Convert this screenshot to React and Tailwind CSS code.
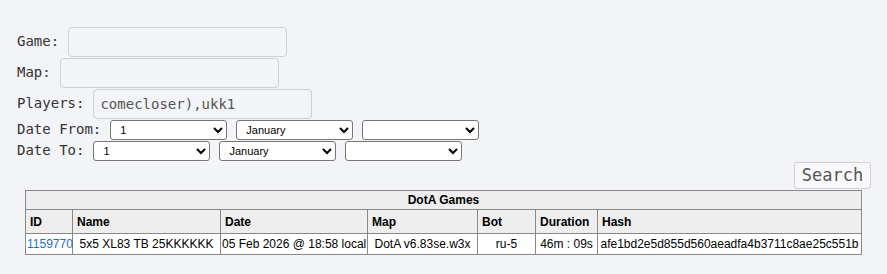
import { useState } from 'react'

const days = Array.from({ length: 31 }, (_, i) => String(i + 1))
const months = ['January', 'February', 'March', 'April', 'May', 'June', 'July', 'August', 'September', 'October', 'November', 'December']

const games = [
  {
    id: '1159770',
    name: '5x5 XL83 TB 25KKKKKK',
    date: '05 Feb 2026 @ 18:58 local',
    map: 'DotA v6.83se.w3x',
    bot: 'ru-5',
    duration: '46m : 09s',
    hash: 'afe1bd2e5d855d560aeadfa4b3711c8ae25c551b'
  }
]

function DateRow({ label }) {
  return (
    <div className="flex items-center h-[21px]">
      <span className="mr-[9px]">{label}</span>
      <div className="flex gap-[9px]">
        <select className="w-[117px] h-[20px] bg-white border border-[#767676] rounded-[3px] text-[11px] pl-[5px] text-black" style={{ fontFamily: '"Liberation Sans", Arial, sans-serif' }} defaultValue="1">
          {days.map((d) => <option key={d}>{d}</option>)}
        </select>
        <select className="w-[117px] h-[20px] bg-white border border-[#767676] rounded-[3px] text-[11px] pl-[5px] text-black" style={{ fontFamily: '"Liberation Sans", Arial, sans-serif' }} defaultValue="January">
          {months.map((m) => <option key={m}>{m}</option>)}
        </select>
        <select className="w-[117px] h-[20px] bg-white border border-[#767676] rounded-[3px] text-[11px] pl-[5px] text-black" style={{ fontFamily: '"Liberation Sans", Arial, sans-serif' }} defaultValue="">
          <option value=""></option>
        </select>
      </div>
    </div>
  )
}

function App() {
  const [game, setGame] = useState('')
  const [map, setMap] = useState('')
  const [players, setPlayers] = useState('comecloser),ukk1')

  const input = 'w-[219px] h-[30px] bg-[#f3f4f8] border border-[#cfd0d4] rounded-[4px] px-[6px] text-[14px] text-[#555] focus:outline-none'

  return (
    <div className="min-h-screen w-[887px] h-[274px] bg-[#f3f4f8] text-[#333]">
      <div className="pt-[26px] pl-[17px] text-[14px] font-['DejaVu_Sans_Mono',monospace]">
        <div className="flex items-center h-[31px]">
          <span className="mr-[9px]">Game:</span>
          <input className={input} value={game} onChange={(e) => setGame(e.target.value)} />
        </div>
        <div className="flex items-center h-[31px]">
          <span className="mr-[9px]">Map:</span>
          <input className={input} value={map} onChange={(e) => setMap(e.target.value)} />
        </div>
        <div className="flex items-center h-[31px]">
          <span className="mr-[9px]">Players:</span>
          <input className={input} value={players} onChange={(e) => setPlayers(e.target.value)} />
        </div>
        <div>
          <DateRow label="Date From:" />
          <DateRow label="Date To:" />
        </div>
      </div>

      <div className="flex justify-end pr-[16px] mt-[1px]">
        <button className="w-[77px] h-[27px] bg-[#f8f8fa] border border-[#cfd0d4] rounded-[3px] text-[17px] text-[#555] font-['DejaVu_Sans_Mono',monospace] leading-none">
          Search
        </button>
      </div>

      <div className="pl-[25px] mt-[1px]">
        <table className="w-[837px] table-fixed border-collapse border border-[#888] text-[12px] text-black font-['Liberation_Sans',Arial,sans-serif]">
          <colgroup>
            <col className="w-[47px]" />
            <col className="w-[148px]" />
            <col className="w-[147px]" />
            <col className="w-[110px]" />
            <col className="w-[58px]" />
            <col className="w-[62px]" />
            <col />
          </colgroup>
          <thead>
            <tr className="bg-[#eeeeee] h-[19px]">
              <th colSpan={7} className="border border-[#888] font-bold text-center p-0">DotA Games</th>
            </tr>
            <tr className="bg-[#eeeeee] h-[24px]">
              {['ID', 'Name', 'Date', 'Map', 'Bot', 'Duration', 'Hash'].map((h) => (
                <th key={h} className="border border-[#888] font-bold text-left px-[4px] py-0">{h}</th>
              ))}
            </tr>
          </thead>
          <tbody>
            {games.map((g) => (
              <tr key={g.id} className="bg-white h-[21px]">
                <td className="border border-[#888] text-center px-[1px] py-0 whitespace-nowrap">
                  <a href="#" className="text-[#1a6fc9]">{g.id}</a>
                </td>
                <td className="border border-[#888] text-center px-[1px] py-0 whitespace-nowrap">{g.name}</td>
                <td className="border border-[#888] text-center px-[1px] py-0 whitespace-nowrap">{g.date}</td>
                <td className="border border-[#888] text-center px-[1px] py-0 whitespace-nowrap">{g.map}</td>
                <td className="border border-[#888] text-center px-[1px] py-0 whitespace-nowrap">{g.bot}</td>
                <td className="border border-[#888] text-center px-[1px] py-0 whitespace-nowrap">{g.duration}</td>
                <td className="border border-[#888] text-center px-[1px] py-0 whitespace-nowrap">{g.hash}</td>
              </tr>
            ))}
          </tbody>
        </table>
      </div>
    </div>
  )
}

export default App
